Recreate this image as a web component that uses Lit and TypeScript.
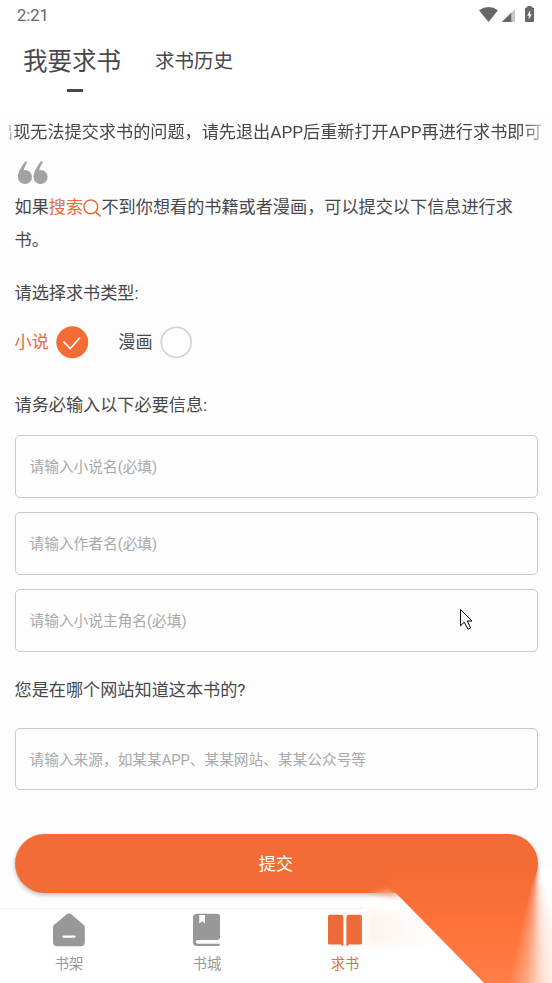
import { LitElement, html, css, svg } from "lit";
import { customElement, property, state } from "lit/decorators.js";
import { classMap } from "lit/directives/class-map.js";

const homeIcon = svg`<svg width="34" height="36" viewBox="0 0 34 36">
  <path d="M1 14.2C1 13 1.5 12.2 2.4 11.4L14.8 1.3C16.2 .2 17.8 .2 19.2 1.3L31.2 11.4C32.3 12.3 32.8 13 32.8 14.2V29C32.8 31.8 31.3 33.3 28.5 33.3H5.3C2.5 33.3 1 31.8 1 29Z" fill="currentColor"/>
  <path d="M11.5 23.6H22.5" stroke="#fff" stroke-width="2.3" stroke-linecap="round"/></svg>`;

const shopIcon = svg`<svg width="34" height="36" viewBox="0 0 34 36">
  <path d="M7 .8H27Q30 .8 30 3.8V24Q30 27 27 27H8Q5.7 27 5.7 28.8Q5.7 30.8 8 30.8H30V31.6Q30 33 28.4 33H7Q3 33 3 29V4.8Q3 .8 7 .8Z" fill="currentColor"/>
  <path d="M9.3 2H15V10.4L12.2 8.2L9.3 10.4Z" fill="#fff"/></svg>`;

const requestIcon = svg`<svg width="34" height="36" viewBox="0 0 34 36">
  <path d="M1.6 1.8H12.8Q15.4 1.8 15.4 4.4V33.2L12.8 31.6H1.6Q0 31.6 0 30V3.4Q0 1.8 1.6 1.8ZM32.4 1.8H21.2Q18.4 1.8 18.4 4.4V33.2L21.2 31.6H32.4Q34 31.6 34 30V3.4Q34 1.8 32.4 1.8Z" fill="currentColor"/></svg>`;

@customElement("type-option")
class TypeOption extends LitElement {
  @property() label = "";
  @property({ type: Boolean }) checked = false;
  static styles = css`
    :host { display: flex; align-items: center; }
    .label { width: 34.3px; margin-right: 7px; font-size: 17.15px; line-height: 33px; white-space: nowrap; }
    .on { color: #e76b3c; }
    svg { display: block; width: 33px; height: 33px; }
  `;
  render() {
    return html`<span class=${classMap({ label: true, on: this.checked })}>${this.label}</span>
      ${this.checked
        ? svg`<svg viewBox="0 0 33 33"><circle cx="16.3" cy="16.3" r="16" fill="#f46c35"/><path d="M7.4 15.6L14.3 22.6L24 11.4" fill="none" stroke="#fff" stroke-width="1.5"/></svg>`
        : svg`<svg viewBox="0 0 33 33"><circle cx="16.3" cy="16.3" r="15" fill="#fff" stroke="#d4d4d4" stroke-width="1.7"/></svg>`}`;
  }
}

@customElement("text-field")
class TextField extends LitElement {
  @property() hint = "";
  static styles = css`
    :host { display: block; }
    .box {
      box-sizing: border-box; display: block; width: 100%; height: var(--field-height, 63px); padding: 2px 14px 0;
      border: 1px solid #cacaca; border-radius: 5px; background: #fdfdfd; outline: none;
      font: 14.7px Roboto, "Noto Sans CJK SC", sans-serif; color: #3c3c3f;
    }
    .box::placeholder { color: #a9a9a9; opacity: 1; }
  `;
  render() {
    return html`<input class="box" placeholder=${this.hint} />`;
  }
}

@customElement("app-root")
class AppRoot extends LitElement {
  @state() private kind = "小说";
  private fields = ["请输入小说名(必填)", "请输入作者名(必填)", "请输入小说主角名(必填)"];
  private nav = [
    { name: "书架", icon: homeIcon, active: false },
    { name: "书城", icon: shopIcon, active: false },
    { name: "求书", icon: requestIcon, active: true },
  ];

  static styles = css`
    :host {
      position: relative; display: flex; flex-direction: column; width: 552px; height: 983px;
      overflow: hidden; background: #fdfdfd; color: #48484c;
      font-family: Roboto, "Noto Sans CJK SC", sans-serif; font-size: 17.15px;
    }
    svg { display: block; }
    .status { display: flex; justify-content: space-between; height: 32px; padding: 0 17px; background: #fff; }
    .time { font-size: 16.5px; line-height: 32px; color: #666; }
    .signals { width: 58px; height: 20px; margin-top: 5px; }
    .tabs { display: flex; height: 80px; padding-left: 23px; background: #fff; }
    .tab { display: flex; flex-direction: column; align-items: center; margin-right: 34px; font-size: 19.5px; line-height: 60px; white-space: nowrap; }
    .tab.current { font-size: 24.5px; }
    .bar { width: 16px; height: 3px; margin: -3.5px 0 0 6px; background: #4b474c; }
    .notice {
      display: flex; height: 38px; margin: 0 9px; overflow: hidden; line-height: 40px; white-space: nowrap;
      -webkit-mask-image: linear-gradient(90deg, rgba(0,0,0,.3) 0, #000 9px, #000 calc(100% - 20px), rgba(0,0,0,.3));
      mask-image: linear-gradient(90deg, rgba(0,0,0,.3) 0, #000 9px, #000 calc(100% - 20px), rgba(0,0,0,.3));
    }
    .ticker { margin-left: -13px; }
    .body { display: flex; flex-direction: column; padding: 0 14.5px; }
    .quote { width: 30px; height: 24px; margin: 11px 0 6px 3.5px; }
    .intro { margin: 0; padding-right: 20px; line-height: 32.6px; }
    .accent { color: #ea6c3e; }
    .lens { display: inline-block; width: 18.4px; height: 18px; vertical-align: -4px; }
    .heading { margin: 0; font-size: 17.15px; font-weight: 400; line-height: 26px; }
    .h1 { margin-top: 23.8px; }
    .h2 { margin-top: 33px; }
    .h3 { margin-top: 25px; }
    .kinds { display: flex; gap: 29.5px; margin-top: 20px; }
    .fields { display: flex; flex-direction: column; gap: 14px; margin-top: 17px; }
    .source { --field-height: 62px; margin-top: 25px; }
    .submit {
      height: 59px; margin-top: 44px; padding: 1px 0 0; border: 0; border-radius: 30px; background: #f46c35; color: #fff;
      font: inherit; line-height: 59px; box-shadow: 0 2px 4px rgba(0,0,0,.27);
    }
    .nav { display: grid; grid-template-columns: repeat(4, 138px); box-sizing: border-box; height: 75px; margin-top: auto; border-top: 1px solid #eee; background: #fff; }
    .item { display: flex; flex-direction: column; align-items: center; padding-top: 4px; color: #989898; }
    .item.active { color: #ee6a38; }
    .name { margin-top: 4px; font-size: 14.3px; line-height: 22px; }
    .flare { position: absolute; right: 0; bottom: 0; width: 192px; height: 143px; pointer-events: none; }
    .beam-edge { position: absolute; right: 0; bottom: 0; width: 192px; height: 143px; filter: blur(.7px); pointer-events: none; }
    .beam {
      width: 196px; height: 147px;
      background: linear-gradient(#f46c35 20%, #f86e37 38%, #ff7238 55%, #ff7e48 100%);
      clip-path: polygon(28px 45px, 32px 25px, 176.5px 21px, 196px 21px, 196px 147px, 128px 147px);
      --fan: conic-gradient(from 0deg at 177px 18px, transparent 0 163deg, rgba(0,0,0,.1) 172deg, rgba(0,0,0,.2) 176.5deg, rgba(0,0,0,.38) 180deg, rgba(0,0,0,.7) 185deg, #000 193deg 330deg, transparent 331deg);
      -webkit-mask-image: var(--fan); mask-image: var(--fan);
    }
    .cursor { position: absolute; left: 460px; top: 609px; width: 13px; height: 22px; }
  `;

  render() {
    return html`
      <div class="status">
        <span class="time">2:21</span>
        <svg class="signals" viewBox="0 0 58 20">
          <path d="M2 5.2Q11.5-1.1 21 5.2L11.5 17Z" fill="#666"/>
          <path d="M38 4V17H25Z" fill="#c8c8c8"/><path d="M34.3 7.7V17H24.8Z" fill="#666"/>
          <path d="M50.3 1H54.7V2.6H56Q57 2.6 57 3.6V16Q57 17 56 17H49Q48 17 48 16V3.6Q48 2.6 49 2.6H50.3Z" fill="#666"/>
          <path d="M53.3 5L50.2 10.7H52L51.6 14.8L54.9 9.2H53Z" fill="#fff"/>
        </svg>
      </div>
      <div class="tabs">
        <div class="tab current">我要求书<div class="bar"></div></div>
        <div class="tab">求书历史</div>
      </div>
      <div class="notice"><span class="ticker">出现无法提交求书的问题，请先退出APP后重新打开APP再进行求书即可</span></div>
      <div class="body">
        <svg class="quote" viewBox="0 0 30 24">
          <g fill="#a0a2a3"><circle cx="7" cy="16" r="7"/><circle cx="22.6" cy="16" r="7"/>
          <path d="M0 16C0 11 3.5 5.4 7.2 .6H9.6C7.6 4 5.9 7.2 5.4 10L7 16ZM15.6 16C15.6 11 19.1 5.4 22.8 .6H25.2C23.2 4 21.5 7.2 21 10L22.6 16Z"/></g>
        </svg>
        <p class="intro">如果<span class="accent">搜索<svg class="lens" viewBox="0 0 18 18"><circle cx="7.6" cy="7.8" r="6.9" fill="none" stroke="currentColor" stroke-width="1.5"/><path d="M12.4 12.8L17.2 17.4" stroke="currentColor" stroke-width="1.6"/></svg></span>不到你想看的书籍或者漫画，可以提交以下信息进行求书。</p>
        <h3 class="heading h1">请选择求书类型:</h3>
        <div class="kinds">
          ${["小说", "漫画"].map((k) => html`<type-option .label=${k} .checked=${k === this.kind} @click=${() => (this.kind = k)}></type-option>`)}
        </div>
        <h3 class="heading h2">请务必输入以下必要信息:</h3>
        <div class="fields">${this.fields.map((f) => html`<text-field .hint=${f}></text-field>`)}</div>
        <h3 class="heading h3">您是在哪个网站知道这本书的?</h3>
        <text-field class="source" .hint=${"请输入来源，如某某APP、某某网站、某某公众号等"}></text-field>
        <button class="submit">提交</button>
      </div>
      <div class="nav">
        ${this.nav.map((n) => html`<div class=${classMap({ item: true, active: n.active })}>${n.icon}<span class="name">${n.name}</span></div>`)}
      </div>
      <svg class="flare" viewBox="360 840 192 143">
        <defs>
          <linearGradient id="haze" x1="0" x2="1"><stop offset="0" stop-color="#fff1ea"/><stop offset="1" stop-color="#fff" stop-opacity="0"/></linearGradient>
          <filter id="soft" x="-50%" y="-50%" width="200%" height="200%"><feGaussianBlur stdDeviation="2"/></filter>
          <filter id="softer" x="-50%" y="-50%" width="200%" height="200%"><feGaussianBlur stdDeviation="4"/></filter>
        </defs>
        <path d="M363 902H400V893H538L540 868H552V983H363Z" fill="#fff"/>
        <path d="M368 912H430L460 946H368Z" fill="url(#haze)" filter="url(#softer)"/>
        <path d="M368 899L394 895L408 908H368Z" fill="#fff" filter="url(#soft)"/>
        <path d="M368 894L388 889L400 898Z" fill="#f9a785" opacity=".8" filter="url(#soft)"/>
      </svg>
      <div class="beam-edge"><div class="beam"></div></div>
      <svg class="cursor" viewBox="0 0 13 22"><path d="M.5 .5V16.8L4.2 13.2L8.1 20.3L10.7 19L7.2 12H12Z" fill="#fff" stroke="#000" stroke-width="1"/></svg>
    `;
  }
}
